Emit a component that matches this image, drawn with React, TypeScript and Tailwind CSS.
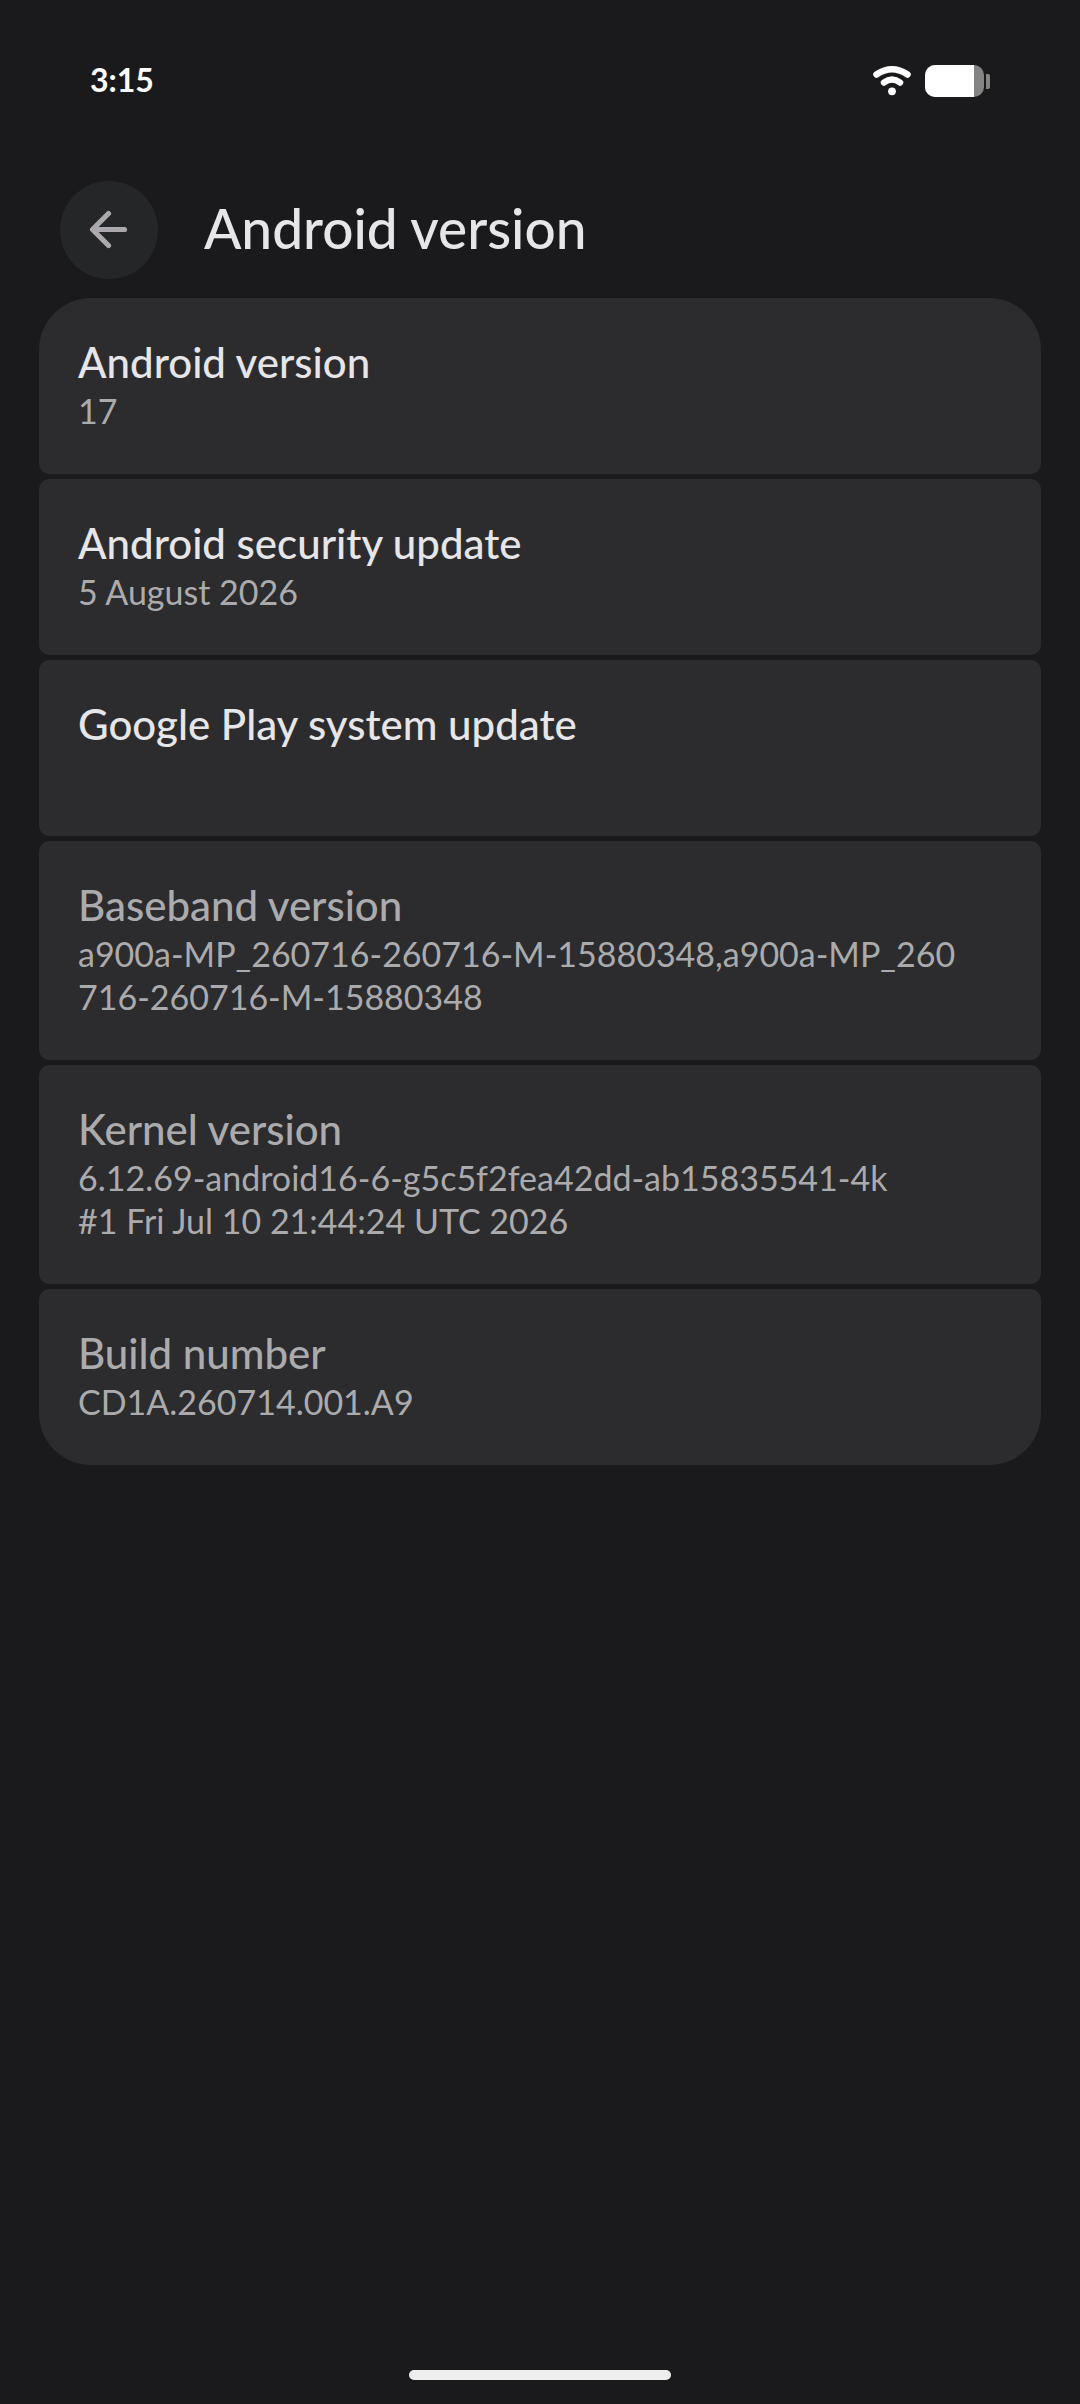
import clsx from "clsx";

interface VersionItem {
  title: string;
  value: string;
  disabled?: boolean;
}

const items: VersionItem[] = [
  { title: "Android version", value: "17" },
  { title: "Android security update", value: "5 August 2026" },
  { title: "Google Play system update", value: "" },
  {
    title: "Baseband version",
    value: "a900a-MP_260716-260716-M-15880348,a900a-MP_260\n716-260716-M-15880348",
    disabled: true,
  },
  {
    title: "Kernel version",
    value:
      "6.12.69-android16-6-g5c5f2fea42dd-ab15835541-4k\n#1 Fri Jul 10 21:44:24 UTC 2026",
    disabled: true,
  },
  { title: "Build number", value: "CD1A.260714.001.A9", disabled: true },
];

function WifiIcon() {
  return (
    <svg width="38" height="32" viewBox="0 0 38 32" fill="none" aria-hidden="true">
      <path
        d="M3.5 9.5Q19 -1 34.5 9.5"
        stroke="white"
        strokeWidth="6.5"
        strokeLinecap="round"
      />
      <path
        d="M11 17.5Q19 11.5 27 17.5"
        stroke="white"
        strokeWidth="6.5"
        strokeLinecap="round"
      />
      <circle cx="19" cy="26.3" r="3.9" fill="white" />
    </svg>
  );
}

function Battery() {
  return (
    <div className="flex items-center gap-0.5">
      <div className="h-8 w-[59px] overflow-hidden rounded-[10px] bg-[#848484]">
        <div className="h-full w-[49px] bg-white" />
      </div>
      <div className="h-[15px] w-1 rounded-r-xs bg-[#848484]" />
    </div>
  );
}

function StatusBar() {
  return (
    <div className="flex h-[162px] items-center justify-between px-[90px] text-white">
      <span className="pb-0.5 text-[32px] leading-10 font-bold">3:15</span>
      <div className="flex items-center gap-[14px]">
        <WifiIcon />
        <Battery />
      </div>
    </div>
  );
}

function VersionCard({ title, value, disabled }: VersionItem) {
  return (
    <li className="rounded-[10px] bg-[#2c2c2e] px-[39px] pt-10 pb-[42px] first:rounded-t-[52px] last:rounded-b-[52px]">
      <h2
        className={clsx(
          "mb-0.5 text-[42px] leading-[49px] font-medium",
          disabled ? "text-[#ababad]" : "text-[#e6e5e8]"
        )}
      >
        {title}
      </h2>
      <p className="min-h-[43px] text-[34px] leading-[43px] whitespace-pre-line text-[#ababad]">
        {value}
      </p>
    </li>
  );
}

export default function App() {
  return (
    <div className="flex min-h-screen flex-col bg-[#1a1a1c] font-['Lato',sans-serif]">
      <StatusBar />

      <header className="flex items-center gap-[46px] px-[60px] py-[19px]">
        <button
          type="button"
          aria-label="Back"
          className="flex size-[98px] items-center justify-center rounded-full bg-[#242628]"
        >
          <svg width="40" height="40" viewBox="0 0 40 40" fill="none" aria-hidden="true">
            <path
              d="M35.5 19.5H4M19.5 3.5L3.5 19.5L19.5 35.5"
              stroke="#aba9ad"
              strokeWidth="5.2"
              strokeLinecap="round"
              strokeLinejoin="round"
            />
          </svg>
        </button>
        <h1 className="pb-1 text-[55px] leading-16 font-medium text-[#e6e5e8]">
          Android version
        </h1>
      </header>

      <main className="grow px-[39px]">
        <ul className="flex flex-col gap-[5px]">
          {items.map((item) => (
            <VersionCard key={item.title} {...item} />
          ))}
        </ul>
      </main>

      <div className="flex justify-center pb-6">
        <div className="h-[10px] w-[262px] rounded-full bg-[#eeeeee]" />
      </div>
    </div>
  );
}
